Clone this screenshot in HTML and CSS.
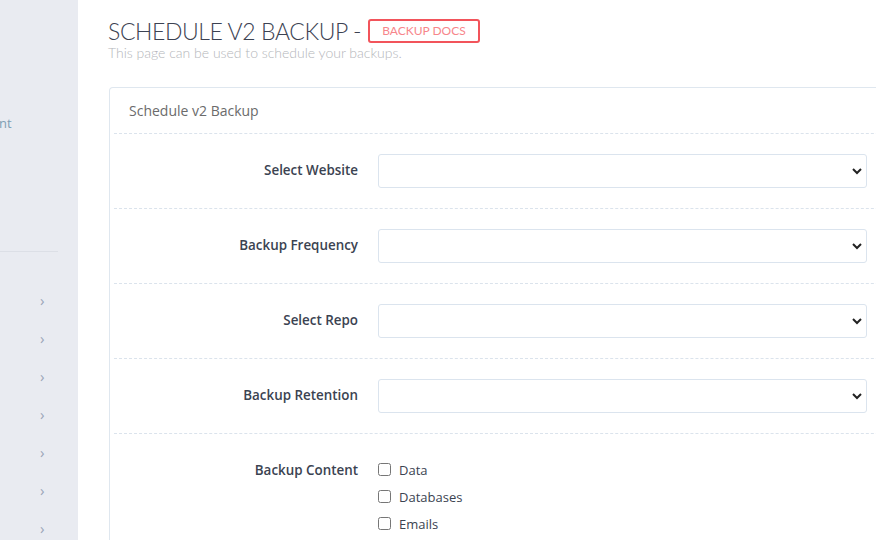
FILE: index.html
```html
<!DOCTYPE html>
<html lang="en">
<head>
    <meta charset="UTF-8">
    <meta name="viewport" content="width=device-width, initial-scale=1.0">
    <title>Schedule V2 Backup</title>
    <link rel="stylesheet" href="styles.css">
</head>
<body>
    <div class="layout">
        <!-- Sidebar (cut off on the left) -->
        <aside class="sidebar">
            <div class="side-top">
                <div class="side-link">nt</div>
            </div>
            <div class="side-divider"></div>
            <ul class="side-menu">
                <li><span class="chev">&rsaquo;</span></li>
                <li><span class="chev">&rsaquo;</span></li>
                <li><span class="chev">&rsaquo;</span></li>
                <li><span class="chev">&rsaquo;</span></li>
                <li><span class="chev">&rsaquo;</span></li>
                <li><span class="chev">&rsaquo;</span></li>
                <li><span class="chev">&rsaquo;</span></li>
            </ul>
        </aside>

        <main class="content">
            <div class="page-title">
                <h2>SCHEDULE V2 BACKUP - <a class="docs-btn" href="#">Backup Docs</a></h2>
                <p>This page can be used to schedule your backups.</p>
            </div>

            <div class="panel">
                <div class="panel-title">Schedule v2 Backup</div>

                <div class="form-row">
                    <label class="form-label">Select Website</label>
                    <select class="form-select"><option></option></select>
                </div>
                <div class="form-row">
                    <label class="form-label">Backup Frequency</label>
                    <select class="form-select"><option></option></select>
                </div>
                <div class="form-row">
                    <label class="form-label">Select Repo</label>
                    <select class="form-select"><option></option></select>
                </div>
                <div class="form-row">
                    <label class="form-label">Backup Retention</label>
                    <select class="form-select"><option></option></select>
                </div>
                <div class="form-row checks-row">
                    <label class="form-label">Backup Content</label>
                    <div class="checks">
                        <label class="check"><input type="checkbox"> Data</label>
                        <label class="check"><input type="checkbox"> Databases</label>
                        <label class="check"><input type="checkbox"> Emails</label>
                    </div>
                </div>
            </div>
        </main>
    </div>
</body>
</html>
```

FILE: styles.css
```css
body {
    margin: 0;
    font-family: "Open Sans", sans-serif;
    background-color: #fff;
    overflow: hidden;
}
.layout {
    display: flex;
    height: 540px;
    overflow: hidden;
}
.sidebar {
    width: 78px;
    flex-shrink: 0;
    background-color: #e9ebf1;
}
.side-top {
    height: 251px;
    padding-top: 114px;
    box-sizing: border-box;
}
.side-link {
    font-size: 13px;
    color: #7f9fb4;
    margin-left: -1px;
}
.side-divider {
    width: 58px;
    height: 1px;
    background-color: #dcdfe6;
}
.side-menu {
    list-style: none;
    margin: 0;
    padding: 48px 0 0;
}
.side-menu li {
    height: 38px;
    position: relative;
}
.chev {
    position: absolute;
    left: 40px;
    top: -10px;
    font-size: 15px;
    color: #9aa5b7;
}
.content {
    flex: 1;
    padding: 0 0 0 30px;
    min-width: 0;
    overflow: hidden;
}
.page-title h2 {
    margin: 18px 0 0;
    font-family: "Lato", sans-serif;
    font-weight: 300;
    font-size: 23px;
    line-height: 26px;
    color: #3c4252;
    letter-spacing: -0.4px;
    display: flex;
    align-items: center;
    height: 26px;
}
.docs-btn {
    display: inline-block;
    margin-left: 7px;
    padding: 0 12px;
    height: 20px;
    line-height: 20px;
    border: 2px solid #f2545b;
    border-radius: 3px;
    color: #f7868b;
    font-family: "Lato", sans-serif;
    font-size: 12px;
    font-weight: 400;
    text-transform: uppercase;
    text-decoration: none;
    letter-spacing: 0;
}
.page-title p {
    margin: 0;
    font-family: "Lato", sans-serif;
    font-weight: 300;
    font-size: 14px;
    line-height: 17px;
    color: #b4b6ba;
}
.panel {
    margin-top: 26px;
    margin-left: 1px;
    width: 820px;
    border: 1px solid #dfe7ef;
    border-bottom: none;
    border-radius: 4px 4px 0 0;
    padding: 0 0 40px 4px;
}
.panel-title {
    padding: 13px 15px 0;
    height: 32px;
    font-size: 14px;
    color: #6b6b6b;
    border-bottom: 1px dashed #dbe3ec;
}
.form-row {
    display: flex;
    align-items: center;
    height: 74px;
    border-bottom: 1px dashed #dbe3ec;
}
.form-label {
    width: 244px;
    text-align: right;
    font-size: 13.4px;
    font-weight: 600;
    color: #3b4351;
    padding-right: 20px;
    margin-top: -2px;
}
.form-select {
    width: 489px;
    height: 34px;
    border: 1px solid #dbe4ee;
    border-radius: 3px;
    background-color: #fff;
    font-family: "Open Sans", sans-serif;
    appearance: none;
    background-image: url("data:image/svg+xml,%3Csvg xmlns='http://www.w3.org/2000/svg' width='10' height='8' viewBox='0 0 10 8'%3E%3Cpath d='M1 2l4 4 4-4' fill='none' stroke='%23222' stroke-width='2'/%3E%3C/svg%3E");
    background-repeat: no-repeat;
    background-position: right 4px center;
}
.checks-row {
    align-items: flex-start;
    height: auto;
    padding-top: 26px;
    border-bottom: none;
}
.checks-row .form-label {
    margin-top: 1px;
}
.checks {
    display: flex;
    flex-direction: column;
    gap: 8px;
}
.check {
    display: flex;
    align-items: center;
    gap: 8px;
    font-size: 13px;
    color: #3b4351;
    height: 19px;
}
.check input {
    margin: 0;
    width: 13px;
    height: 13px;
}
```
